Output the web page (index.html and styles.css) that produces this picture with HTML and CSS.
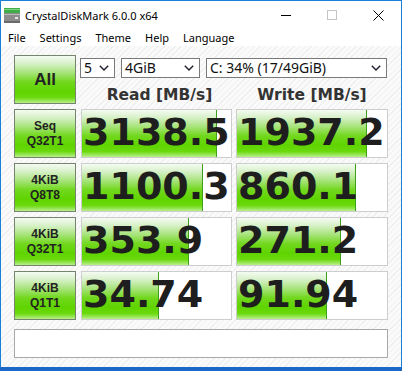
FILE: index.html
```html
<!DOCTYPE html>
<html>
<head>
  <title>CrystalDiskMark 6.0.0 x64</title>
  <link rel="stylesheet" href="styles.css">
</head>
<body>
  <div class="window">
    <div class="titlebar">
      <svg class="app-icon" width="16" height="15" viewBox="0 0 16 15">
        <rect x="0" y="0" width="16" height="5" fill="#3fae49"/>
        <rect x="0" y="1" width="16" height="1" fill="#7fd486"/>
        <rect x="0" y="5" width="16" height="10" fill="#8c8c8c"/>
        <rect x="0" y="6" width="16" height="1" fill="#b8b8b8"/>
        <rect x="0" y="13" width="16" height="2" fill="#6a6a6a"/>
        <rect x="11" y="9" width="3" height="2" fill="#e6e6e6"/>
      </svg>
      <span class="title">CrystalDiskMark 6.0.0 x64</span>
      <div class="controls">
        <div class="ctl">
          <svg width="10" height="10" viewBox="0 0 10 10"><line x1="0" y1="5.5" x2="10" y2="5.5" stroke="#000" stroke-width="1"/></svg>
        </div>
        <div class="ctl">
          <svg width="10" height="10" viewBox="0 0 10 10"><rect x="0.5" y="0.5" width="9" height="9" fill="none" stroke="#c4c4c4" stroke-width="1"/></svg>
        </div>
        <div class="ctl">
          <svg width="11" height="11" viewBox="0 0 11 11"><path d="M0.5 0.5 L10.5 10.5 M10.5 0.5 L0.5 10.5" stroke="#000" stroke-width="1"/></svg>
        </div>
      </div>
    </div>

    <div class="menubar">
      <span>File</span>
      <span>Settings</span>
      <span>Theme</span>
      <span>Help</span>
      <span>Language</span>
    </div>

    <div class="content">
      <div class="grid">
        <button class="test all">All</button>
        <div class="top">
          <div class="selects">
            <div class="select s-count"><span>5</span><svg width="10" height="6" viewBox="0 0 10 6"><polyline points="0.8,0.8 5,5 9.2,0.8" fill="none" stroke="#1c1c2c" stroke-width="1.4"/></svg></div>
            <div class="select s-size"><span>4GiB</span><svg width="10" height="6" viewBox="0 0 10 6"><polyline points="0.8,0.8 5,5 9.2,0.8" fill="none" stroke="#1c1c2c" stroke-width="1.4"/></svg></div>
            <div class="select s-drive"><span>C: 34% (17/49GiB)</span><svg width="10" height="6" viewBox="0 0 10 6"><polyline points="0.8,0.8 5,5 9.2,0.8" fill="none" stroke="#1c1c2c" stroke-width="1.4"/></svg></div>
          </div>
          <div class="heads">
            <div class="head-read">Read [MB/s]</div>
            <div>Write [MB/s]</div>
          </div>
        </div>

        <button class="test">Seq<br>Q32T1</button>
        <div class="score"><div class="bar" style="width:89.9%"></div><span>3138.5</span></div>
        <div class="score"><div class="bar" style="width:85.7%"></div><span>1937.2</span></div>

        <button class="test">4KiB<br>Q8T8</button>
        <div class="score"><div class="bar" style="width:80.8%"></div><span>1100.3</span></div>
        <div class="score"><div class="bar" style="width:78.7%"></div><span>860.1</span></div>

        <button class="test">4KiB<br>Q32T1</button>
        <div class="score"><div class="bar" style="width:71.0%"></div><span>353.9</span></div>
        <div class="score"><div class="bar" style="width:68.7%"></div><span>271.2</span></div>

        <button class="test">4KiB<br>Q1T1</button>
        <div class="score"><div class="bar" style="width:50.8%"></div><span>34.74</span></div>
        <div class="score"><div class="bar" style="width:59.3%"></div><span>91.94</span></div>
      </div>
      <div class="comment"></div>
    </div>
  </div>
</body>
</html>
```

FILE: styles.css
```css
body {
  margin: 0;
  background: #1c68c8;
  font-family: "Noto Sans", sans-serif;
  color: #000;
}

.window {
  width: 400px;
  height: 366px;
  border: 1px solid #1a7fd6;
  border-bottom: none;
  background: #fff;
}

/* title bar */
.titlebar {
  height: 28px;
  display: flex;
  align-items: center;
}
.app-icon { margin-left: 3px; }
.title {
  margin-left: 5px;
  font-size: 11px;
}
.controls {
  margin-left: auto;
  display: flex;
  height: 100%;
}
.ctl {
  width: 46px;
  display: flex;
  align-items: center;
  justify-content: center;
}

/* menu */
.menubar {
  height: 17px;
  display: flex;
  align-items: center;
  font-size: 11px;
}
.menubar span { padding: 0 7px; }

/* main panel */
.content {
  height: 321px;
  box-sizing: border-box;
  padding: 9px 0 0 13px;
  background: repeating-linear-gradient(135deg, #fafafa 0 3px, #efefef 3px 4px);
}
.grid {
  display: grid;
  grid-template-columns: 63px 151px 152px;
  grid-template-rows: repeat(5, 49px);
  column-gap: 4px;
  row-gap: 5px;
}

.test {
  width: 62px;
  height: 49px;
  padding: 0;
  border: 1px solid #75836f;
  background: linear-gradient(#f5fbf2 0%, #d9f1cc 15%, #a8e47c 35%, #72d81e 55%, #5fd400 75%, #6ad90c 88%, #b8ef8c 100%);
  font: bold 12px/15px "Liberation Sans", sans-serif;
  color: #222;
}
.test.all { font-size: 17px; }

.top {
  grid-column: 2 / 4;
  display: flex;
  flex-direction: column;
}
.selects {
  display: flex;
  gap: 6px;
  margin: 3px 0 0 -1px;
}
.select {
  height: 20px;
  box-sizing: border-box;
  border: 1px solid #7a7a7a;
  background: #fff;
  display: flex;
  align-items: center;
  justify-content: space-between;
  padding: 0 5px 0 3px;
  font-size: 14px;
  line-height: 18px;
  color: #111;
}
.s-count { width: 35px; }
.s-size { width: 79px; }
.s-drive { width: 181px; }

.heads {
  flex: 1;
  display: grid;
  grid-template-columns: 151px 152px;
  column-gap: 4px;
  align-items: center;
  padding-top: 7px;
  font: bold 15.5px "DejaVu Sans", sans-serif;
  color: #333;
  text-align: center;
}
.head-read { padding-left: 6px; }

.score {
  position: relative;
  overflow: hidden;
  box-sizing: border-box;
  border: 1px solid #cdcdcd;
  background: #fff;
  display: flex;
  align-items: center;
  padding: 0 0 3px 1px;
  font: bold 38px "DejaVu Sans", sans-serif;
  color: #1e1e1e;
  white-space: nowrap;
}
.score .bar {
  position: absolute;
  left: 0;
  top: 0;
  bottom: 0;
  border-right: 1px solid #3f9f1a;
  background: linear-gradient(#f5fbf2 0%, #d9f1cc 15%, #a8e47c 35%, #72d81e 55%, #5fd400 75%, #6ad90c 88%, #b8ef8c 100%);
}
.score span { position: relative; }

.comment {
  width: 374px;
  height: 29px;
  margin-top: 9px;
  box-sizing: border-box;
  border: 1px solid #a8a8a8;
  background: #fff;
}
```
